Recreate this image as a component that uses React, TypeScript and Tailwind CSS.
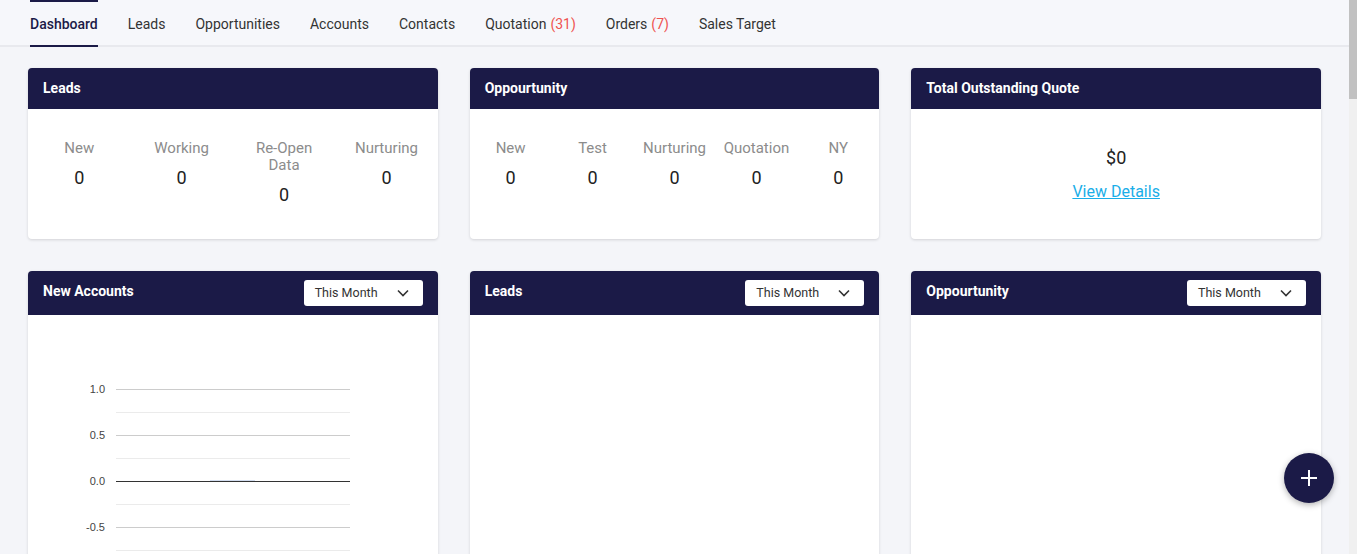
import React from "react";

const NAVY = "bg-[#1b1a47]";

function Card({ title, right, headerClass, children }: { title: string; right?: React.ReactNode; headerClass: string; children: React.ReactNode }) {
  return (
    <div className="bg-white rounded-[4px] shadow-[0_1px_3px_rgba(0,0,0,0.14)] overflow-hidden">
      <div className={`${NAVY} ${headerClass} px-[15px] flex justify-between items-start`}>
        <div className="text-white font-bold text-[14px] leading-[20px]">{title}</div>
        {right}
      </div>
      {children}
    </div>
  );
}

function Stat({ label, value }: { label: string; value: string }) {
  return (
    <div className="flex-1 basis-0 min-w-0 flex flex-col items-center text-center px-[10px]">
      <div className="text-[15px] leading-[17px] text-[#8c8c8c]">{label}</div>
      <div className="text-[18px] leading-[22px] text-[#222] mt-[10px]">{value}</div>
    </div>
  );
}

function Select() {
  return (
    <div className="w-[119px] h-[26px] bg-white rounded-[3px] flex items-center justify-between pl-[11px] pr-[14px] -mt-[1px]">
      <span className="text-[12.5px] text-[#333]">This Month</span>
      <svg width="12" height="8" viewBox="0 0 12 8" fill="none">
        <path d="M1 1.5 L6 6.5 L11 1.5" stroke="#333" strokeWidth="1.6" />
      </svg>
    </div>
  );
}

function Chart() {
  const major = [74, 120, 166, 212];
  const minor = [97, 143, 189, 235];
  const labels = ["1.0", "0.5", "0.0", "-0.5"];
  return (
    <svg width="410" height="300" className="block">
      {minor.map((y) => (
        <line key={"m" + y} x1="88" x2="322" y1={y + 0.5} y2={y + 0.5} stroke="#ebebeb" strokeWidth="1" />
      ))}
      {major.map((y, i) => (
        <g key={y}>
          <line x1="88" x2="322" y1={y + 0.5} y2={y + 0.5} stroke={i === 2 ? "#333" : "#cccccc"} strokeWidth="1" />
          <text x="77" y={y + 4} textAnchor="end" fontSize="11" fill="#444444" fontFamily="'Liberation Sans', Arial, sans-serif">
            {labels[i]}
          </text>
        </g>
      ))}
      <line x1="182" x2="227" y1="165.5" y2="165.5" stroke="#d3ddef" strokeWidth="1" />
    </svg>
  );
}

export default function App() {
  const tabs: { label: string; count?: string; active?: boolean }[] = [
    { label: "Dashboard", active: true },
    { label: "Leads" },
    { label: "Opportunities" },
    { label: "Accounts" },
    { label: "Contacts" },
    { label: "Quotation", count: "(31)" },
    { label: "Orders", count: "(7)" },
    { label: "Sales Target" },
  ];
  return (
    <div className="h-[554px] w-full flex overflow-hidden bg-[#f4f5f9]" style={{ fontFamily: "Roboto, 'Noto Sans', sans-serif" }}>
      <div className="flex-1 flex flex-col overflow-hidden">
        <nav className="h-[47px] shrink-0 bg-[#f6f7fb] border-b-2 border-[#e8e9ee] flex pl-[30px] gap-[30px]">
          {tabs.map((t) => (
            <div
              key={t.label}
              className={`flex items-center pt-[2px] text-[14px] ${t.active ? "text-[#1b1a47] font-medium border-t-2 border-b-2 border-[#1b1a47] -mb-[2px]" : "text-[#333] border-t-2 border-transparent"}`}
            >
              <span>{t.label}</span>
              {t.count && <span className="text-[#ef5350] ml-[4px]">{t.count}</span>}
            </div>
          ))}
        </nav>
        <div className="px-[28px] pt-[21px] grid grid-cols-3 gap-x-[32px] gap-y-[32px]">
          <Card title="Leads" headerClass="h-[41px] pt-[10px]">
            <div className="h-[130px] flex pt-[31px]">
              <Stat label="New" value="0" />
              <Stat label="Working" value="0" />
              <Stat label="Re-Open Data" value="0" />
              <Stat label="Nurturing" value="0" />
            </div>
          </Card>
          <Card title="Oppourtunity" headerClass="h-[41px] pt-[10px]">
            <div className="h-[130px] flex pt-[31px]">
              <Stat label="New" value="0" />
              <Stat label="Test" value="0" />
              <Stat label="Nurturing" value="0" />
              <Stat label="Quotation" value="0" />
              <Stat label="NY" value="0" />
            </div>
          </Card>
          <Card title="Total Outstanding Quote" headerClass="h-[41px] pt-[10px]">
            <div className="h-[130px] flex flex-col items-center pt-[37px]">
              <div className="text-[18px] leading-[24px] text-[#222]">$0</div>
              <a className="text-[16px] leading-[20px] text-[#1aaee8] underline mt-[12px]">View Details</a>
            </div>
          </Card>
          <Card title="New Accounts" right={<Select />} headerClass="h-[44px] pt-[10px]">
            <Chart />
          </Card>
          <Card title="Leads" right={<Select />} headerClass="h-[44px] pt-[10px]">
            <div className="h-[300px]" />
          </Card>
          <Card title="Oppourtunity" right={<Select />} headerClass="h-[44px] pt-[10px]">
            <div className="h-[300px]" />
          </Card>
        </div>
      </div>
      <div className="w-[8px] shrink-0 bg-[#f0f0f0] flex flex-col">
        <div className="h-[99px] bg-[#c1c1c1]" />
      </div>
      <button className="fixed right-[23px] bottom-[51px] w-[50px] h-[50px] rounded-full bg-[#1b1a47] shadow-[0_2px_6px_rgba(0,0,0,0.3)] flex items-center justify-center">
        <svg width="18" height="18" viewBox="0 0 18 18">
          <path d="M9 1 V17 M1 9 H17" stroke="white" strokeWidth="2" />
        </svg>
      </button>
    </div>
  );
}
